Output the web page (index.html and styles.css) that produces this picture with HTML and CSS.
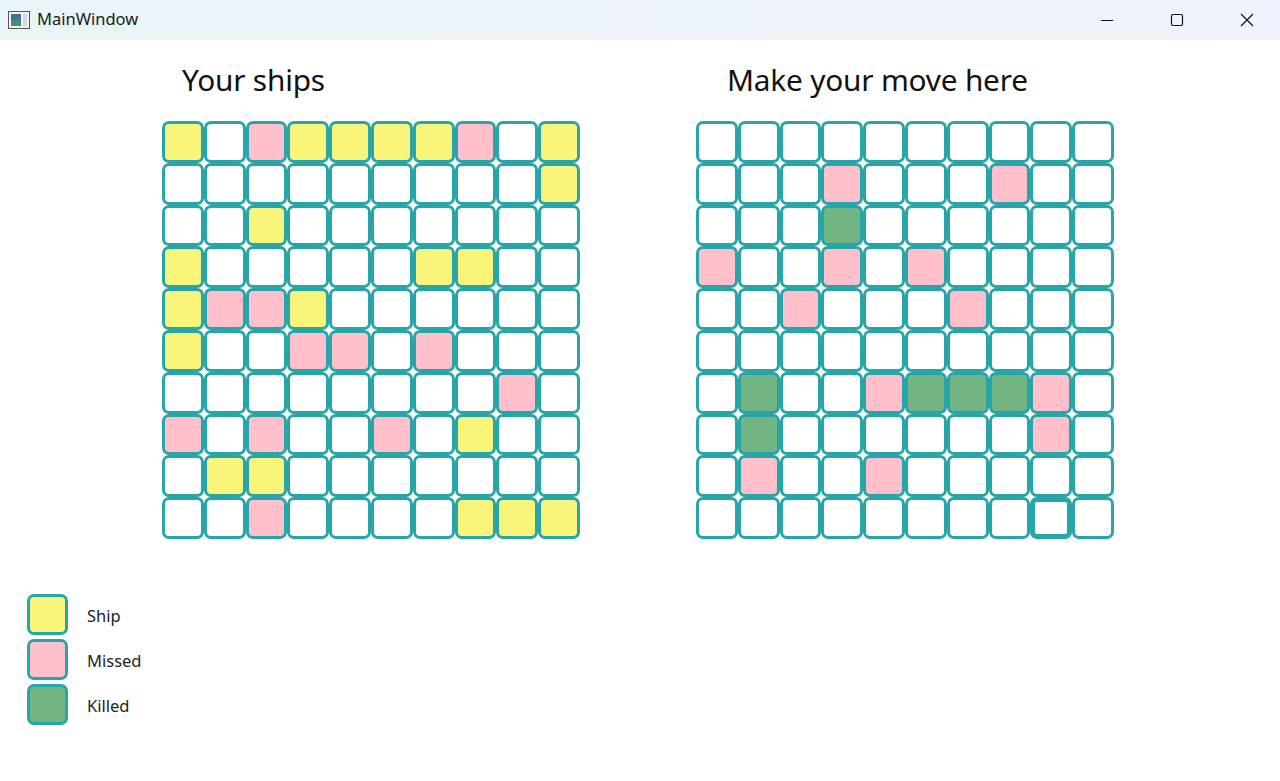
FILE: index.html
```html
<!DOCTYPE html>
<html>
<head>
<meta charset="utf-8">
<title>MainWindow</title>
<link rel="stylesheet" href="styles.css">
</head>
<body>
<div class="titlebar">
  <div class="app">
    <svg class="appicon" width="22" height="18" viewBox="0 0 22 18">
      <rect x="0.5" y="0.5" width="21" height="17" fill="#f4f4f4" stroke="#555"/>
      <rect x="3" y="3" width="10" height="12" fill="#3f8f7a"/>
      <rect x="3" y="3" width="10" height="5" fill="#3a6fa0"/>
      <rect x="15" y="3" width="4" height="12" fill="#d8d8d8"/>
    </svg>
    <span class="apptitle">MainWindow</span>
  </div>
  <div class="controls">
    <svg class="ctl" width="16" height="16" viewBox="0 0 16 16"><path d="M2 8.5h12" stroke="#111" stroke-width="1"/></svg>
    <svg class="ctl" width="16" height="16" viewBox="0 0 16 16"><rect x="2.5" y="2.5" width="11" height="11" rx="1.5" fill="none" stroke="#111" stroke-width="1.2"/></svg>
    <svg class="ctl" width="16" height="16" viewBox="0 0 16 16"><path d="M2 2L14 14M14 2L2 14" stroke="#111" stroke-width="1.2"/></svg>
  </div>
</div>
<div class="content">
  <div class="boards">
    <div class="panel left">
      <h1 class="title t-left">Your ships</h1>
      <div class="grid">
        <div class="c y"></div><div class="c"></div><div class="c p"></div><div class="c y"></div><div class="c y"></div><div class="c y"></div><div class="c y"></div><div class="c p"></div><div class="c"></div><div class="c y"></div>
        <div class="c"></div><div class="c"></div><div class="c"></div><div class="c"></div><div class="c"></div><div class="c"></div><div class="c"></div><div class="c"></div><div class="c"></div><div class="c y"></div>
        <div class="c"></div><div class="c"></div><div class="c y"></div><div class="c"></div><div class="c"></div><div class="c"></div><div class="c"></div><div class="c"></div><div class="c"></div><div class="c"></div>
        <div class="c y"></div><div class="c"></div><div class="c"></div><div class="c"></div><div class="c"></div><div class="c"></div><div class="c y"></div><div class="c y"></div><div class="c"></div><div class="c"></div>
        <div class="c y"></div><div class="c p"></div><div class="c p"></div><div class="c y"></div><div class="c"></div><div class="c"></div><div class="c"></div><div class="c"></div><div class="c"></div><div class="c"></div>
        <div class="c y"></div><div class="c"></div><div class="c"></div><div class="c p"></div><div class="c p"></div><div class="c"></div><div class="c p"></div><div class="c"></div><div class="c"></div><div class="c"></div>
        <div class="c"></div><div class="c"></div><div class="c"></div><div class="c"></div><div class="c"></div><div class="c"></div><div class="c"></div><div class="c"></div><div class="c p"></div><div class="c"></div>
        <div class="c p"></div><div class="c"></div><div class="c p"></div><div class="c"></div><div class="c"></div><div class="c p"></div><div class="c"></div><div class="c y"></div><div class="c"></div><div class="c"></div>
        <div class="c"></div><div class="c y"></div><div class="c y"></div><div class="c"></div><div class="c"></div><div class="c"></div><div class="c"></div><div class="c"></div><div class="c"></div><div class="c"></div>
        <div class="c"></div><div class="c"></div><div class="c p"></div><div class="c"></div><div class="c"></div><div class="c"></div><div class="c"></div><div class="c y"></div><div class="c y"></div><div class="c y"></div>
      </div>
    </div>
    <div class="panel right">
      <h1 class="title t-right">Make your move here</h1>
      <div class="grid">
        <div class="c"></div><div class="c"></div><div class="c"></div><div class="c"></div><div class="c"></div><div class="c"></div><div class="c"></div><div class="c"></div><div class="c"></div><div class="c"></div>
        <div class="c"></div><div class="c"></div><div class="c"></div><div class="c p"></div><div class="c"></div><div class="c"></div><div class="c"></div><div class="c p"></div><div class="c"></div><div class="c"></div>
        <div class="c"></div><div class="c"></div><div class="c"></div><div class="c g"></div><div class="c"></div><div class="c"></div><div class="c"></div><div class="c"></div><div class="c"></div><div class="c"></div>
        <div class="c p"></div><div class="c"></div><div class="c"></div><div class="c p"></div><div class="c"></div><div class="c p"></div><div class="c"></div><div class="c"></div><div class="c"></div><div class="c"></div>
        <div class="c"></div><div class="c"></div><div class="c p"></div><div class="c"></div><div class="c"></div><div class="c"></div><div class="c p"></div><div class="c"></div><div class="c"></div><div class="c"></div>
        <div class="c"></div><div class="c"></div><div class="c"></div><div class="c"></div><div class="c"></div><div class="c"></div><div class="c"></div><div class="c"></div><div class="c"></div><div class="c"></div>
        <div class="c"></div><div class="c g"></div><div class="c"></div><div class="c"></div><div class="c p"></div><div class="c g"></div><div class="c g"></div><div class="c g"></div><div class="c p"></div><div class="c"></div>
        <div class="c"></div><div class="c g"></div><div class="c"></div><div class="c"></div><div class="c"></div><div class="c"></div><div class="c"></div><div class="c"></div><div class="c p"></div><div class="c"></div>
        <div class="c"></div><div class="c p"></div><div class="c"></div><div class="c"></div><div class="c p"></div><div class="c"></div><div class="c"></div><div class="c"></div><div class="c"></div><div class="c"></div>
        <div class="c"></div><div class="c"></div><div class="c"></div><div class="c"></div><div class="c"></div><div class="c"></div><div class="c"></div><div class="c"></div><div class="c sel"></div><div class="c"></div>
      </div>
    </div>
  </div>
  <div class="legend">
    <div class="legend-row"><div class="swatch y"></div><span class="legend-text">Ship</span></div>
    <div class="legend-row"><div class="swatch p"></div><span class="legend-text">Missed</span></div>
    <div class="legend-row"><div class="swatch g"></div><span class="legend-text">Killed</span></div>
  </div>
</div>
</body>
</html>
```
FILE: styles.css
```css
* { box-sizing: border-box; }
html, body { margin: 0; padding: 0; background: #ffffff; }
body {
  width: 1280px;
  height: 781px;
  overflow: hidden;
  font-family: "Noto Sans", "Open Sans", sans-serif;
  color: #000;
}
.titlebar {
  height: 40px;
  background: linear-gradient(90deg, #e9f5f9 0%, #eef3fa 60%, #eff3fb 100%);
  display: flex;
  align-items: center;
  justify-content: space-between;
}
.app {
  display: flex;
  align-items: center;
  padding-left: 8px;
  gap: 7px;
}
.appicon { display: block; }
.apptitle {
  font-size: 16.5px;
  color: #1a1a1a;
  line-height: 20px;
  margin-top: -3px;
}
.controls {
  display: flex;
  height: 100%;
  align-items: center;
}
.ctl {
  display: block;
  width: 16px;
  height: 16px;
  margin: 0 27px;
}
.controls .ctl:last-child { margin-right: 25px; }
.content { padding-top: 20px; }
.boards {
  display: flex;
  padding-left: 162px;
  gap: 116px;
}
.panel { display: flex; flex-direction: column; }
.title {
  margin: 0;
  font-weight: 400;
  font-size: 29.8px;
  line-height: 40px;
  height: 40px;
  color: #111;
  letter-spacing: -0.2px;
}
.t-left { margin-left: 20px; }
.t-right { margin-left: 31px; }
.grid {
  margin-top: 21px;
  display: grid;
  grid-template-columns: repeat(10, 41.8px);
  grid-auto-rows: 41.8px;
  width: 418px;
}
.c {
  width: 41.8px;
  height: 41.8px;
  border: 3px solid #27a5a8;
  border-radius: 7px;
  background: #ffffff;
}
.y { background: #f9f47a; }
.p { background: #ffc0cb; }
.g { background: #73b582; }
.c.sel { border-width: 5px; }
.legend {
  margin-top: 55px;
  padding-left: 27px;
  display: flex;
  flex-direction: column;
  gap: 4px;
}
.legend-row {
  display: flex;
  align-items: center;
  height: 41px;
}
.swatch {
  width: 41px;
  height: 41px;
  border: 3px solid #27a5a8;
  border-radius: 7px;
}
.legend-text {
  margin-left: 19px;
  font-size: 16.5px;
  color: #222;
  margin-top: 3px;
}
```
